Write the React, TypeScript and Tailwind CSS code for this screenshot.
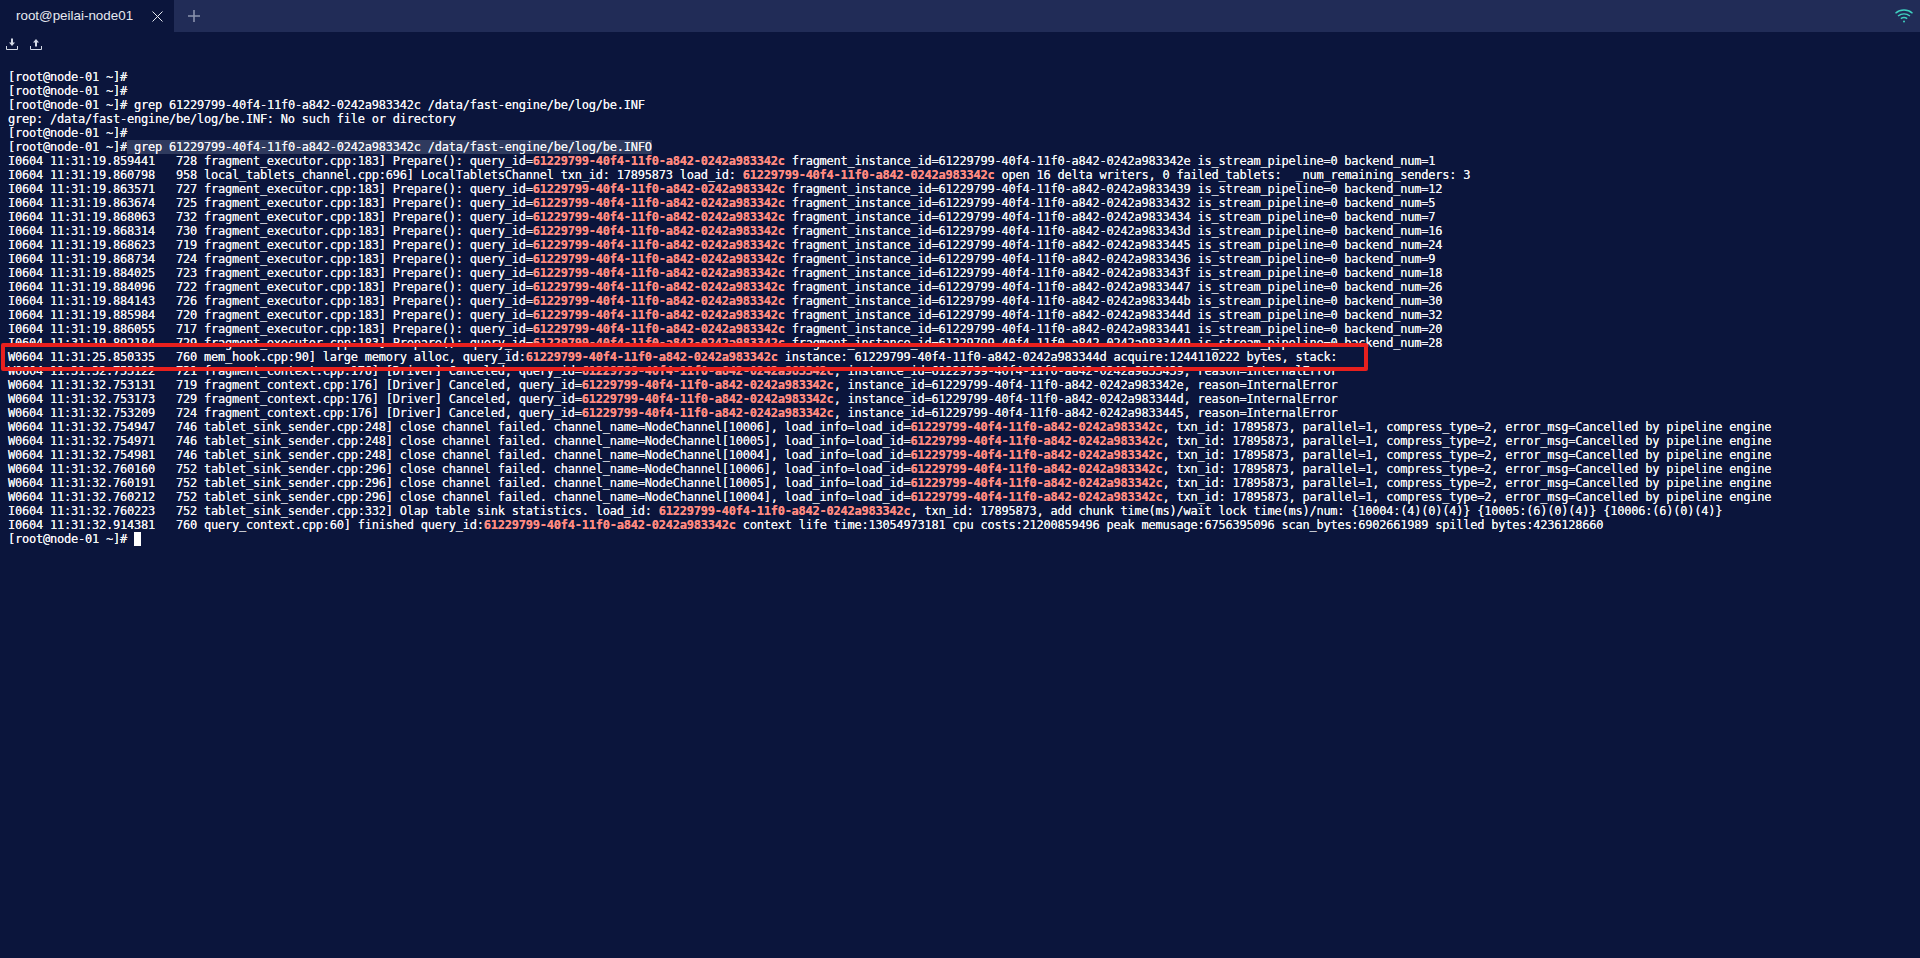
import { Fragment } from 'react'

const QID = '61229799-40f4-11f0-a842-0242a983342c'
const PREFIX = '61229799-40f4-11f0-a842-0242a98'

const prepare = (ts: string, tid: string, inst: string, num: number) =>
  `I0604 11:31:19.${ts}   ${tid} fragment_executor.cpp:183] Prepare(): query_id=${QID} fragment_instance_id=${PREFIX}${inst} is_stream_pipeline=0 backend_num=${num}`

const canceled = (ts: string, tid: string, inst: string) =>
  `W0604 11:31:32.${ts}   ${tid} fragment_context.cpp:176] [Driver] Canceled, query_id=${QID}, instance_id=${PREFIX}${inst}, reason=InternalError`

const closeFailed = (ts: string, tid: string, cpp: string, node: string) =>
  `W0604 11:31:32.${ts}   ${tid} tablet_sink_sender.cpp:${cpp}] close channel failed. channel_name=NodeChannel[${node}], load_info=load_id=${QID}, txn_id: 17895873, parallel=1, compress_type=2, error_msg=Cancelled by pipeline engine`

const LOG_LINES = [
  prepare('859441', '728', '3342e', 1),
  `I0604 11:31:19.860798   958 local_tablets_channel.cpp:696] LocalTabletsChannel txn_id: 17895873 load_id: ${QID} open 16 delta writers, 0 failed_tablets:  _num_remaining_senders: 3`,
  prepare('863571', '727', '33439', 12),
  prepare('863674', '725', '33432', 5),
  prepare('868063', '732', '33434', 7),
  prepare('868314', '730', '3343d', 16),
  prepare('868623', '719', '33445', 24),
  prepare('868734', '724', '33436', 9),
  prepare('884025', '723', '3343f', 18),
  prepare('884096', '722', '33447', 26),
  prepare('884143', '726', '3344b', 30),
  prepare('885984', '720', '3344d', 32),
  prepare('886055', '717', '33441', 20),
  prepare('892184', '729', '33449', 28),
  `W0604 11:31:25.850335   760 mem_hook.cpp:90] large memory alloc, query_id:${QID} instance: 61229799-40f4-11f0-a842-0242a983344d acquire:1244110222 bytes, stack:`,
  canceled('753122', '721', '33439'),
  canceled('753131', '719', '3342e'),
  canceled('753173', '729', '3344d'),
  canceled('753209', '724', '33445'),
  closeFailed('754947', '746', '248', '10006'),
  closeFailed('754971', '746', '248', '10005'),
  closeFailed('754981', '746', '248', '10004'),
  closeFailed('760160', '752', '296', '10006'),
  closeFailed('760191', '752', '296', '10005'),
  closeFailed('760212', '752', '296', '10004'),
  `I0604 11:31:32.760223   752 tablet_sink_sender.cpp:332] Olap table sink statistics. load_id: ${QID}, txn_id: 17895873, add chunk time(ms)/wait lock time(ms)/num: {10004:(4)(0)(4)} {10005:(6)(0)(4)} {10006:(6)(0)(4)}`,
  `I0604 11:31:32.914381   760 query_context.cpp:60] finished query_id:${QID} context life time:13054973181 cpu costs:21200859496 peak memusage:6756395096 scan_bytes:6902661989 spilled bytes:4236128660`,
]

function LogLine({ text }: { text: string }) {
  const parts = text.split(QID)
  return (
    <div className="h-[14px]">
      {parts.map((part, i) => (
        <Fragment key={i}>
          {part}
          {i < parts.length - 1 && <span className="font-bold text-[#ff8a80]">{QID}</span>}
        </Fragment>
      ))}
    </div>
  )
}

function DownloadIcon() {
  return (
    <svg width="14" height="14" viewBox="0 0 14 14" fill="none">
      <path d="M1.5 9v3.5h11V9" stroke="#d5dae6" strokeWidth="1" />
      <path d="M6 1.5h2v4h2L7 9 4 5.5h2z" fill="#d5dae6" />
    </svg>
  )
}

function UploadIcon() {
  return (
    <svg width="14" height="14" viewBox="0 0 14 14" fill="none">
      <path d="M1.5 9v3.5h11V9" stroke="#d5dae6" strokeWidth="1" />
      <path d="M6 9.5h2v-4h2L7 2 4 5.5h2z" fill="#d5dae6" />
    </svg>
  )
}

export default function App() {
  return (
    <div className="h-[958px] w-[1920px] overflow-hidden bg-[#0b153c] text-white">
      {/* Tabs */}
      <div className="flex h-8 items-center bg-[#212c57]">
        <div className="flex h-full w-[174px] flex-shrink-0 items-center bg-[#0b153c] pl-4 font-['Liberation_Sans',sans-serif] text-[13.4px] text-[#e6e9f0]">
          <span className="w-[136px]">root@peilai-node01</span>
          <svg width="11" height="11" viewBox="0 0 11 11" stroke="#e6e9f0" strokeWidth="1">
            <path d="M.5.5l10 10M10.5.5l-10 10" />
          </svg>
        </div>
        <svg className="ml-[14px]" width="12" height="12" viewBox="0 0 12 12" stroke="#8a92ad" strokeWidth="1.6">
          <path d="M6 0v12M0 6h12" />
        </svg>
        <svg className="ml-auto mr-[6px]" width="20" height="16" viewBox="0 0 20 16" fill="none" stroke="#3fd0c0" strokeWidth="1.4">
          <path d="M1.5 5.2C6.5 1 13.5 1 18.5 5.2" />
          <path d="M4 8C7.6 5.2 12.4 5.2 16 8" />
          <path d="M6.8 10.6c2-1.4 4.4-1.4 6.4 0" />
          <circle cx="10" cy="13.4" r="1" fill="#3fd0c0" stroke="none" />
        </svg>
      </div>

      {/* Toolbar */}
      <div className="flex h-[24px] items-center gap-[10px] pl-[5px]">
        <DownloadIcon />
        <UploadIcon />
      </div>

      {/* Terminal */}
      <div className="relative pl-[8px] pt-[14px] font-['DejaVu_Sans_Mono',monospace] text-[12px] leading-[14px] tracking-[-0.228px] whitespace-pre text-[#f2f3f6] [text-shadow:0_0_0.6px_currentColor]">
        <div className="h-[14px]">[root@node-01 ~]#</div>
        <div className="h-[14px]">[root@node-01 ~]#</div>
        <div className="h-[14px]">[root@node-01 ~]# grep {QID} /data/fast-engine/be/log/be.INF</div>
        <div className="h-[14px]">grep: /data/fast-engine/be/log/be.INF: No such file or directory</div>
        <div className="h-[14px]">[root@node-01 ~]#</div>
        <div className="h-[14px]">
          [root@node-01 ~]#<span className="bg-[#2f3a5e]"> grep {QID} /data/fast-engine/be/log/be.INFO</span>
        </div>
        {LOG_LINES.map((line, i) => (
          <LogLine key={i} text={line} />
        ))}
        <div className="flex h-[14px] items-center">
          [root@node-01 ~]#<span className="ml-[7px] h-[14px] w-[7px] bg-white" />
        </div>

        {/* Annotation drawn over the log */}
        <div className="absolute left-[1px] top-[287px] h-[28px] w-[1367px] rounded-[2px] border-[4.5px] border-[#e8201e]" />
      </div>
    </div>
  )
}
